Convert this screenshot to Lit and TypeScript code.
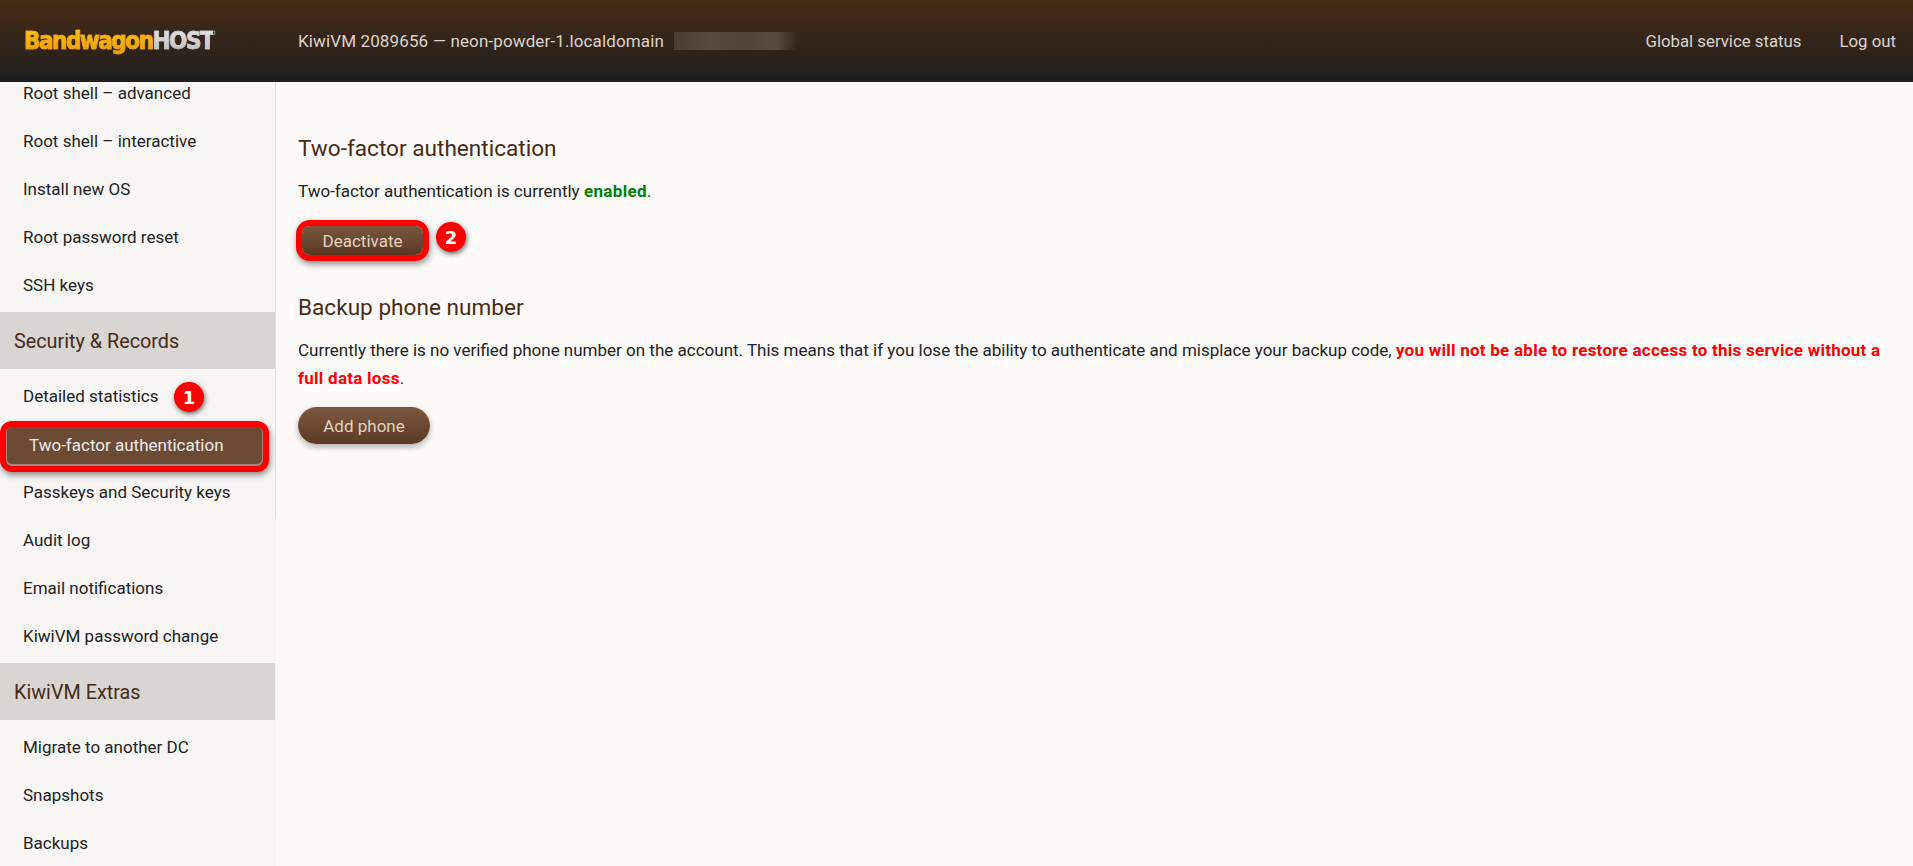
import { LitElement, html, css } from "lit";
import { customElement } from "lit/decorators.js";

@customElement("app-root")
export class AppRoot extends LitElement {
  static styles = css`
    :host {
      display: block;
      height: 866px;
      overflow: hidden;
      font-family: Roboto, "Noto Sans", sans-serif;
      font-size: 17px;
      color: #222;
      background: #fbfaf9;
    }
    * { box-sizing: border-box; }
    .header {
      height: 82px;
      display: flex;
      align-items: center;
      background: linear-gradient(#472b15, #1f1f1f);
      color: #ddd;
      padding-right: 17px;
    }
    .logo {
      width: 298px;
      padding-left: 24px;
      font-family: "DejaVu Sans Condensed", "DejaVu Sans", sans-serif;
      font-weight: 700;
      font-size: 24px;
      letter-spacing: -1.5px;
      white-space: nowrap;
    }
    .logo span {
      -webkit-background-clip: text;
      background-clip: text;
      color: transparent;
    }
    .logo .a { background-image: linear-gradient(#fcc419, #e99a04); -webkit-text-stroke: 0.6px #f2a90e; }
    .logo .b { background-image: linear-gradient(#e6e6e6, #b9b9b9); -webkit-text-stroke: 0.6px #cfcfcf; }
    .title { flex: 1; display: flex; align-items: center; color: #ddd3c8; letter-spacing: 0.13px; }
    .blur {
      margin-left: 10px;
      width: 124px;
      height: 18px;
      background: linear-gradient(90deg, #4b3e31, #574b3f 30%, #50453a 55%, #584c40 82%, rgba(88, 76, 64, 0));
    }
    .nav { display: flex; gap: 38px; color: #d8d4ce; font-size: 16.8px; }
    .body { display: flex; height: 784px; }
    .side {
      width: 276px;
      flex: none;
      overflow: hidden;
      background: linear-gradient(#e3e1df, #e3e1df) right top / 1px 437px no-repeat, #f7f6f5;
      color: #222;
    }
    .side-in { margin-top: -13px; }
    .item { height: 48px; display: flex; align-items: center; padding-left: 23px; position: relative; }
    .group {
      height: 57px;
      margin: 3px 1px 3px 0;
      display: flex;
      align-items: center;
      padding: 2px 0 0 14px;
      background: #d8d5d2;
      color: #472b15;
      font-size: 19.8px;
    }
    .item.active {
      height: 39px;
      margin: 7px 13px 2px 6px;
      padding: 0 0 4px 23px;
      color: #eee;
      background: #6c4a33;
      border-radius: 6px;
      box-shadow: inset 0 -1px 0 1px rgba(255,255,255,.35), 0 0 0 6px #f00, 1px 3px 6px 6px rgba(0,0,0,.45);
    }
    .main { flex: 1; padding: 52px 17px 0 22px; }
    .main h2 { margin: 0; font-weight: 400; font-size: 22.6px; line-height: 30px; color: #472b15; }
    .main p { margin: 0; line-height: 28px; }
    .ok { color: #008000; font-weight: 700; letter-spacing: 0.35px; }
    .bad { color: #f00; font-weight: 700; letter-spacing: 0.25px; }
    .btn {
      display: inline-flex;
      align-items: center;
      justify-content: center;
      height: 37px;
      width: 132px;
      border-radius: 19px;
      background: linear-gradient(#7f5a42, #5a3822);
      color: #e2d3c2;
      box-shadow: 0 3px 6px rgba(0,0,0,.3);
      position: relative;
    }
    .btn.outlined {
      width: 121px;
      height: 29px;
      border-radius: 8px;
      box-shadow: 0 0 0 6px #f00, 1px 3px 6px 6px rgba(0,0,0,.45);
      margin-left: 4px;
      background: linear-gradient(#7a563e, #5a3822);
    }
    .badge {
      position: absolute;
      width: 30px;
      height: 30px;
      border-radius: 50%;
      background: #f00;
      color: #fff;
      font-family: "DejaVu Sans", sans-serif;
      font-weight: 700;
      font-size: 18px;
      display: flex;
      align-items: center;
      justify-content: center;
      box-shadow: 1px 2px 5px rgba(0,0,0,.6);
    }
    .b1 { left: 174px; top: 10px; }
    .b2 { left: 134px; top: -4px; }
    .row { display: flex; }
    .main .s1 { margin-top: 13px; }
    .main .s2 { margin-top: 21px; }
    .main .s3 { margin-top: 38px; }
    .main .s4 { margin-top: 13px; }
    .main .s5 { margin-top: 15px; }
  `;

  render() {
    const a = ["Root shell – advanced", "Root shell – interactive", "Install new OS", "Root password reset", "SSH keys"];
    const c = ["Passkeys and Security keys", "Audit log", "Email notifications", "KiwiVM password change"];
    const d = ["Migrate to another DC", "Snapshots", "Backups"];
    return html`
      <div class="header">
        <div class="logo"><span class="a">Bandwagon</span><span class="b">HOST</span></div>
        <div class="title">KiwiVM 2089656 — neon-powder-1.localdomain <span class="blur"></span></div>
        <div class="nav"><span>Global service status</span><span>Log out</span></div>
      </div>
      <div class="body">
        <div class="side"><div class="side-in">
          ${a.map((t) => html`<div class="item">${t}</div>`)}
          <div class="group">Security &amp; Records</div>
          <div class="item">Detailed statistics<span class="badge b1">1</span></div>
          <div class="item active">Two-factor authentication</div>
          ${c.map((t) => html`<div class="item">${t}</div>`)}
          <div class="group">KiwiVM Extras</div>
          ${d.map((t) => html`<div class="item">${t}</div>`)}
        </div></div>
        <div class="main">
          <h2>Two-factor authentication</h2>
          <p class="s1">Two-factor authentication is currently <span class="ok">enabled</span>.</p>
          <div class="row s2"><span class="btn outlined">Deactivate<span class="badge b2">2</span></span></div>
          <h2 class="s3">Backup phone number</h2>
          <p class="s4">Currently there is no verified phone number on the account. This means that if you lose the ability to authenticate and misplace your backup code, <span class="bad">you will not be able to restore access to this service without a full data loss</span>.</p>
          <div class="row s5"><span class="btn">Add phone</span></div>
        </div>
      </div>
    `;
  }
}
